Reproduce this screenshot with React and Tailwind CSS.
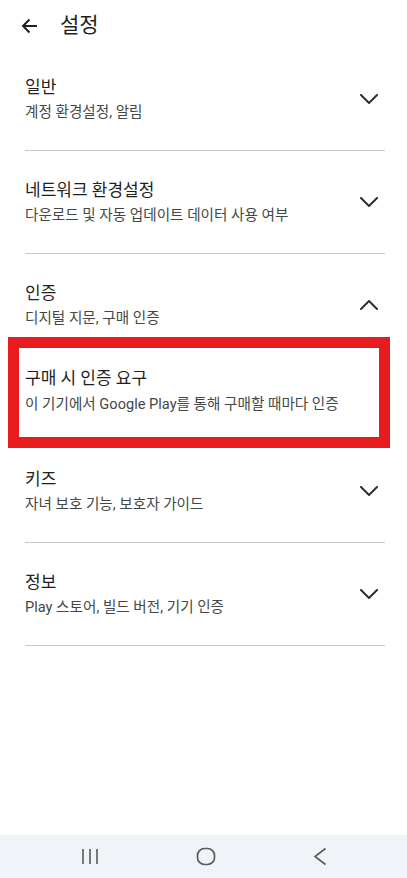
import React from "react";

const font = { fontFamily: 'Roboto, "Noto Sans CJK KR", sans-serif' };

function Chevron({ up }) {
  return (
    <svg width="18" height="10" viewBox="0 0 18 10" fill="none" className="shrink-0">
      <path
        d={up ? "M1 9 L9 1 L17 9" : "M1 1 L9 9 L17 1"}
        stroke="#303030"
        strokeWidth="2"
        strokeLinecap="square"
      />
    </svg>
  );
}

function Section({ title, sub, up, divider = true, top = "pt-[27px]" }) {
  return (
    <div className="px-[25px]">
      <div className={`flex flex-row items-center justify-between ${top} pb-[27px]`}>
        <div className="flex flex-col">
          <div className="text-[17px] leading-[24px] text-[#1f1f1f]">{title}</div>
          <div className="text-[14.6px] leading-[22px] text-[#444746] mt-[2px]">{sub}</div>
        </div>
        <div className="mr-[4px]">
          <Chevron up={up} />
        </div>
      </div>
      {divider && <div className="h-px bg-[#c9c9c9] w-[360px]"></div>}
    </div>
  );
}

export default function App() {
  return (
    <div className="h-screen w-full bg-white flex flex-col" style={font}>
      <div className="h-[48px] flex flex-row items-center px-[21px]">
        <svg width="17" height="16" viewBox="0 0 17 16" fill="none" className="mt-[3px]">
          <path d="M16 8 H2 M8.5 1.5 L2 8 L8.5 14.5" stroke="#202020" strokeWidth="2" />
        </svg>
        <div className="ml-[22px] text-[21px] leading-[28px] text-[#1f1f1f] mt-[1px]">설정</div>
      </div>

      <Section title="일반" sub="계정 환경설정, 알림" />
      <Section title="네트워크 환경설정" sub="다운로드 및 자동 업데이트 데이터 사용 여부" />
      <div className="px-[25px]">
        <div className="flex flex-row items-center justify-between pt-[27px]">
          <div className="flex flex-col">
            <div className="text-[17px] leading-[24px] text-[#1f1f1f]">인증</div>
            <div className="text-[14.6px] leading-[22px] text-[#444746] mt-[2px]">디지털 지문, 구매 인증</div>
          </div>
          <div className="mr-[4px]">
            <Chevron up />
          </div>
        </div>
      </div>

      <div className="ml-[8px] mt-[8px] w-[382px] border-[11px] border-[#e81c1f] pl-[6px] pt-[18px] pb-[22px]">
        <div className="text-[17px] leading-[24px] text-[#1f1f1f]">구매 시 인증 요구</div>
        <div className="text-[14.6px] leading-[22px] text-[#444746] mt-[3px]">
          이 기기에서 Google Play를 통해 구매할 때마다 인증
        </div>
      </div>

      <Section title="키즈" sub="자녀 보호 기능, 보호자 가이드" top="pt-[19px]" />
      <Section title="정보" sub="Play 스토어, 빌드 버전, 기기 인증" />

      <div className="flex-1"></div>

      <div className="h-[43px] bg-[#f0f3f8] flex flex-row items-center justify-around px-[32px]">
        <svg width="18" height="17" viewBox="0 0 18 17" fill="none">
          <path d="M2 1 V16 M9 1 V16 M16 1 V16" stroke="#5a5a5a" strokeWidth="1.6" />
        </svg>
        <svg width="20" height="19" viewBox="0 0 20 19" fill="none">
          <rect x="1.5" y="1.5" width="17" height="16" rx="7" stroke="#5a5a5a" strokeWidth="1.7" />
        </svg>
        <svg width="14" height="19" viewBox="0 0 14 19" fill="none">
          <path d="M12.5 1.5 L2 9.5 L12.5 17.5" stroke="#5a5a5a" strokeWidth="1.6" />
        </svg>
      </div>
    </div>
  );
}
